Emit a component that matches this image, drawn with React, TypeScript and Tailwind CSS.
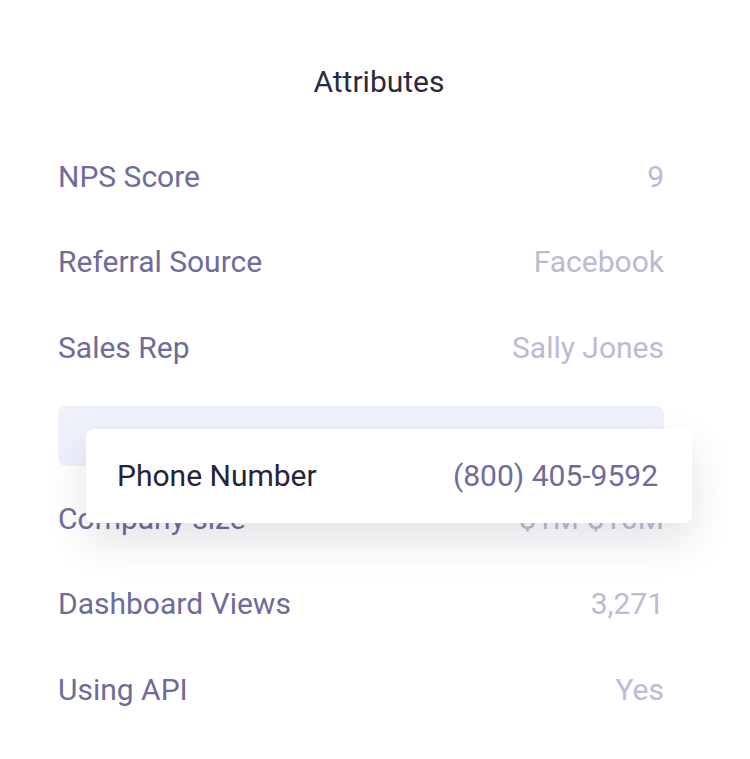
const rows: { label: string; value: string }[] = [
  { label: 'NPS Score', value: '9' },
  { label: 'Referral Source', value: 'Facebook' },
  { label: 'Sales Rep', value: 'Sally Jones' },
];

const rowsAfter: { label: string; value: string }[] = [
  { label: 'Company size', value: '$1M-$10M' },
  { label: 'Dashboard Views', value: '3,271' },
  { label: 'Using API', value: 'Yes' },
];

function Row({ label, value }: { label: string; value: string }) {
  return (
    <div className="flex h-[85.5px] items-center justify-between">
      <span className="text-[#6f6b9b]">{label}</span>
      <span className="text-[#bcbad6]">{value}</span>
    </div>
  );
}

export default function App() {
  return (
    <div className="min-h-[759px] w-[750px] bg-white font-['Roboto',sans-serif] text-[30px] leading-[36px]">
      <div className="pl-[8px] pt-[64px] text-center text-[#2b2a40]">Attributes</div>

      <div className="ml-[58px] mt-[34px] w-[606px]">
        {rows.map(r => (
          <Row key={r.label} {...r} />
        ))}

        {/* drop slot for the row being dragged */}
        <div className="relative flex h-[85.5px] items-center">
          <div className="mt-[6px] h-[60px] w-full rounded-lg bg-[#eef0fc]" />
          <div className="absolute left-[28px] top-[38px] z-10 flex h-[94px] w-[606px] items-center justify-between rounded-lg bg-white pl-[31px] pr-[34px] shadow-[0_18px_40px_rgba(40,40,70,0.13)]">
            <span className="text-[#25243a]">Phone Number</span>
            <span className="text-[#6f6b9b]">(800) 405-9592</span>
          </div>
        </div>

        {rowsAfter.map(r => (
          <Row key={r.label} {...r} />
        ))}
      </div>
    </div>
  );
}
